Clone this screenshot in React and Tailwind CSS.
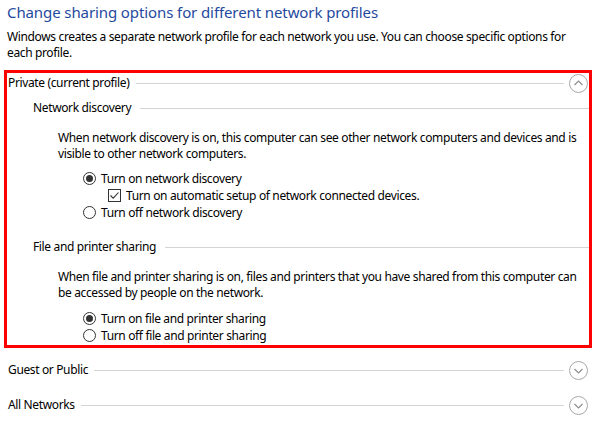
import React from "react";

const font = { fontFamily: '"Noto Sans", "Open Sans", Arial, sans-serif' };

// --- small drawn controls ---
const Radio = ({ checked }) => (
  <span className="flex h-[13px] w-[13px] shrink-0 items-center justify-center rounded-full border border-[#333333] bg-white">
    {checked && <span className="h-[7px] w-[7px] rounded-full bg-[#333333]" />}
  </span>
);

const Checkbox = () => (
  <span className="flex h-[13px] w-[13px] shrink-0 items-center justify-center border border-[#333333] bg-white">
    <svg width="11" height="11" viewBox="0 0 11 11">
      <polyline points="1.5,5.5 4.2,8.2 9.5,2.5" fill="none" stroke="#333333" strokeWidth="1.1" />
    </svg>
  </span>
);

const CircleChevron = ({ up }) => (
  <svg width="19" height="19" viewBox="0 0 19 19" className="shrink-0">
    <circle cx="9.5" cy="9.5" r="9" fill="white" stroke="#a8a8a8" strokeWidth="1" />
    {up ? (
      <polyline points="5.5,11 9.5,7 13.5,11" fill="none" stroke="#8f8f8f" strokeWidth="1.2" />
    ) : (
      <polyline points="5.5,8 9.5,12 13.5,8" fill="none" stroke="#8f8f8f" strokeWidth="1.2" />
    )}
  </svg>
);

const Rule = () => <div className="h-px flex-1 bg-[#d4d4d4]" />;

const ProfileHeader = ({ label, up }) => (
  <div className="flex h-[20px] items-center pl-[1px] pr-[1px]">
    <span className="whitespace-nowrap">{label}</span>
    <div className="ml-[6px] mr-[5px] flex flex-1 items-center">
      <Rule />
    </div>
    <CircleChevron up={up} />
  </div>
);

const GroupHeader = ({ label }) => (
  <div className="flex h-[20px] items-center pl-[26px]">
    <span className="whitespace-nowrap">{label}</span>
    <div className="ml-[9px] flex flex-1 items-center">
      <Rule />
    </div>
  </div>
);

const Option = ({ checked, label, indent = false, box = false }) => (
  <div className={`flex h-[17px] items-center gap-[5px] ${indent ? "pl-[101px]" : "pl-[76px]"}`}>
    {box ? <Checkbox /> : <Radio checked={checked} />}
    <span className="whitespace-nowrap">{label}</span>
  </div>
);

const Lines = ({ lines, className = "" }) => (
  <div className={className}>
    {lines.map((l) => (
      <div key={l} className="h-[16px] whitespace-nowrap">
        {l}
      </div>
    ))}
  </div>
);

export default function App() {
  return (
    <div
      className="h-[427px] w-[596px] overflow-hidden bg-white text-[12px] leading-[16px] tracking-[-0.36px] text-black"
      style={font}
    >
      <h1 className="whitespace-nowrap pl-[7px] pt-[2px] text-[15px] leading-[20px] tracking-[-0.1px] text-[#1f4aa0]">
        Change sharing options for different network profiles
      </h1>
      <Lines
        className="mt-[7px] pl-[7px]"
        lines={[
          "Windows creates a separate network profile for each network you use. You can choose specific options for",
          "each profile.",
        ]}
      />

      {/* --- Private profile (expanded, highlighted) --- */}
      <div className="ml-[4px] mt-[9px] h-[278px] w-[588px] border-[3px] border-[#ff0000]">
        <ProfileHeader label="Private (current profile)" up />

        <div className="mt-[5px]">
          <GroupHeader label="Network discovery" />
          <Lines
            className="mt-[12px] pl-[51px]"
            lines={[
              "When network discovery is on, this computer can see other network computers and devices and is",
              "visible to other network computers.",
            ]}
          />
          <div className="mt-[8px]">
            <Option checked label="Turn on network discovery" />
            <Option box indent label="Turn on automatic setup of network connected devices." />
            <Option label="Turn off network discovery" />
          </div>
        </div>

        <div className="mt-[16px]">
          <GroupHeader label="File and printer sharing" />
          <Lines
            className="mt-[12px] pl-[51px]"
            lines={[
              "When file and printer sharing is on, files and printers that you have shared from this computer can",
              "be accessed by people on the network.",
            ]}
          />
          <div className="mt-[9px]">
            <Option checked label="Turn on file and printer sharing" />
            <Option label="Turn off file and printer sharing" />
          </div>
        </div>
      </div>

      {/* --- collapsed profiles --- */}
      <div className="ml-[7px] mt-[12px] w-[582px]">
        <ProfileHeader label="Guest or Public" />
      </div>
      <div className="ml-[7px] mt-[15px] w-[582px]">
        <ProfileHeader label="All Networks" />
      </div>
    </div>
  );
}
